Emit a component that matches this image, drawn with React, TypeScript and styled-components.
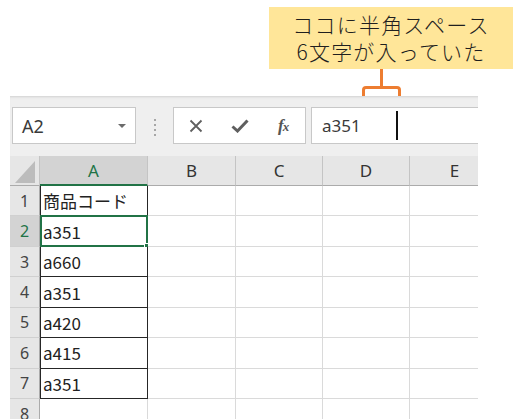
import React from "react";
import styled, { createGlobalStyle } from "styled-components";

const GlobalStyle = createGlobalStyle`
  html, body { margin: 0; padding: 0; background: #ffffff; }
  body { font-family: "Noto Sans CJK JP", "Noto Sans", sans-serif; }
  * { box-sizing: border-box; }
`;

const Page = styled.div`
  width: 531px;
  height: 419px;
  overflow: hidden;
  display: flex;
  flex-direction: column;
`;

const Annotation = styled.div`
  height: 96px;
  display: flex;
  flex-direction: column;
`;

const Callout = styled.div`
  margin: 7px 0 0 269px;
  width: 244px;
  height: 62px;
  background: #ffe699;
  display: flex;
  flex-direction: column;
  align-items: center;
  justify-content: center;
  font-family: "Noto Sans CJK JP", sans-serif;
  font-weight: 300;
  font-size: 21px;
  letter-spacing: 1.2px;
  color: #1f1f1f;
`;

const CalloutLine = styled.div`
  height: 27px;
  line-height: 27px;
  overflow: visible;
`;

const Bracket = styled.svg`
  display: block;
  margin-left: 360px;
  width: 42px;
  height: 27px;
`;

const Excel = styled.div`
  margin-left: 10px;
  width: 468px;
  flex: 1;
  overflow: hidden;
  display: flex;
  flex-direction: column;
`;

const Toolbar = styled.div`
  height: 60px;
  flex: none;
  background: #efefef;
  border-top: 1px solid #dadada;
  box-shadow: inset 0 2px 2px -1px #e2e2e2;
  display: flex;
  align-items: flex-start;
  padding: 10px 0 0 2px;
`;

const Box = styled.div<{ $w?: number }>`
  height: 37px;
  background: #ffffff;
  border: 1px solid #c8c8c8;
  display: flex;
  align-items: center;
  ${(p) => (p.$w ? `width: ${p.$w}px; flex: none;` : `flex: 1; border-right: none;`)}
`;

const NameText = styled.span`
  font-family: "Noto Sans", sans-serif;
  font-size: 18px;
  color: #3a3a3a;
  padding-left: 9px;
  flex: 1;
`;

const DropArrow = styled.span`
  width: 0;
  height: 0;
  border-left: 4px solid transparent;
  border-right: 4px solid transparent;
  border-top: 4px solid #6b6b6b;
  margin-right: 9px;
`;

const Dots = styled.div`
  width: 37px;
  flex: none;
  display: flex;
  flex-direction: column;
  align-items: center;
  gap: 3px;
  padding-top: 12px;
  span {
    width: 2px;
    height: 2px;
    background: #a6a6a6;
  }
`;

const Slot = styled.div`
  width: 44px;
  height: 100%;
  display: flex;
  align-items: center;
  justify-content: center;
  color: #5f5f5f;
`;

const FxText = styled.span`
  font-family: "Liberation Serif", serif;
  font-style: italic;
  font-weight: bold;
  font-size: 17px;
  color: #555;
  letter-spacing: -1px;
  span { font-size: 13px; }
`;

const FormulaWrap = styled.div`
  flex: 1;
  margin-left: 5px;
  display: flex;
`;

const FormulaText = styled.span`
  font-family: "Noto Sans", sans-serif;
  font-size: 17px;
  color: #3a3a3a;
  padding-left: 10px;
`;

const Caret = styled.span`
  width: 2px;
  height: 29px;
  background: #111;
  margin-left: 35px;
`;

const Grid = styled.div`
  display: grid;
  grid-template-columns: 30px 108px 88px 87px 87px 90px;
  grid-template-rows: 30px;
  grid-auto-rows: 30.45px;
  flex: none;
`;

const Corner = styled.div`
  background: #e6e6e6;
  border-bottom: 1px solid #ababab;
  border-right: 1px solid #c4c4c4;
  display: flex;
  align-items: flex-end;
  justify-content: flex-end;
  padding: 0 4px 2px 0;
`;

const ColHead = styled.div<{ $sel?: boolean }>`
  background: ${(p) => (p.$sel ? "#d3d3d3" : "#e6e6e6")};
  border-right: 1px solid #c4c4c4;
  border-bottom: ${(p) => (p.$sel ? "2px solid #217346" : "1px solid #ababab")};
  display: flex;
  align-items: center;
  justify-content: center;
  font-family: "Noto Sans", sans-serif;
  font-size: 17px;
  color: ${(p) => (p.$sel ? "#217346" : "#333")};
`;

const RowHead = styled.div<{ $sel?: boolean }>`
  background: ${(p) => (p.$sel ? "#d3d3d3" : "#e6e6e6")};
  border-bottom: 1px solid #d0d0d0;
  border-right: 1px solid #ababab;
  display: flex;
  align-items: center;
  justify-content: center;
  font-family: "Noto Sans", sans-serif;
  font-size: 16px;
  color: ${(p) => (p.$sel ? "#217346" : "#444")};
`;

const Cell = styled.div<{ $boxed?: boolean }>`
  position: relative;
  background: #ffffff;
  border-right: 1px solid ${(p) => (p.$boxed ? "#262626" : "#dadada")};
  border-bottom: 1px solid ${(p) => (p.$boxed ? "#262626" : "#dadada")};
  border-left: ${(p) => (p.$boxed ? "1px solid #262626" : "none")};
  display: flex;
  align-items: center;
  padding-left: 2px;
  font-family: "Noto Sans CJK JP", "Noto Sans", sans-serif;
  font-size: 17px;
  color: #222;
  white-space: nowrap;
`;

const Selection = styled.div`
  position: absolute;
  left: -1px;
  top: -1px;
  right: -1px;
  bottom: -1px;
  border: 2px solid #217346;
  pointer-events: none;
`;

const FillHandle = styled.div`
  position: absolute;
  right: -4px;
  bottom: -4px;
  width: 6px;
  height: 6px;
  background: #217346;
  border: 1px solid #ffffff;
`;

const cols = ["A", "B", "C", "D", "E"];
const data = ["商品コード", "a351", "a660", "a351", "a420", "a415", "a351", ""];

export default function App() {
  return (
    <Page>
      <GlobalStyle />
      <Annotation>
        <Callout>
          <CalloutLine>ココに半角スペース</CalloutLine>
          <CalloutLine>6文字が入っていた</CalloutLine>
        </Callout>
        <Bracket viewBox="0 0 42 27">
          <path
            d="M21.5 0 V18.5 M3.5 27 V21 Q3.5 18.5 6 18.5 H37 Q39.5 18.5 39.5 21 V27"
            fill="none"
            stroke="#ed7d31"
            strokeWidth="3"
          />
        </Bracket>
      </Annotation>
      <Excel>
        <Toolbar>
          <Box $w={124}>
            <NameText>A2</NameText>
            <DropArrow />
          </Box>
          <Dots>
            <span />
            <span />
            <span />
            <span />
          </Dots>
          <Box $w={133}>
            <Slot>
              <svg width="14" height="14" viewBox="0 0 14 14">
                <path d="M1.5 1.5 L12.5 12.5 M12.5 1.5 L1.5 12.5" stroke="#5f5f5f" strokeWidth="1.8" />
              </svg>
            </Slot>
            <Slot>
              <svg width="18" height="14" viewBox="0 0 18 14">
                <path d="M1.5 7.5 L6.5 12 L16.5 1.5" fill="none" stroke="#5f5f5f" strokeWidth="3" />
              </svg>
            </Slot>
            <Slot>
              <FxText>
                f<span>x</span>
              </FxText>
            </Slot>
          </Box>
          <FormulaWrap>
            <Box>
              <FormulaText>a351</FormulaText>
              <Caret />
            </Box>
          </FormulaWrap>
        </Toolbar>
        <Grid>
          <Corner>
            <svg width="20" height="22" viewBox="0 0 20 22">
              <path d="M20 0 V22 H0 Z" fill="#bcbcbc" />
            </svg>
          </Corner>
          {cols.map((c) => (
            <ColHead key={c} $sel={c === "A"}>
              {c}
            </ColHead>
          ))}
          {data.map((v, i) => (
            <React.Fragment key={i}>
              <RowHead $sel={i === 1}>{i + 1}</RowHead>
              <Cell $boxed={i < 7}>
                {v}
                {i === 1 && (
                  <Selection>
                    <FillHandle />
                  </Selection>
                )}
              </Cell>
              {[1, 2, 3, 4].map((j) => (
                <Cell key={j} />
              ))}
            </React.Fragment>
          ))}
        </Grid>
      </Excel>
    </Page>
  );
}
